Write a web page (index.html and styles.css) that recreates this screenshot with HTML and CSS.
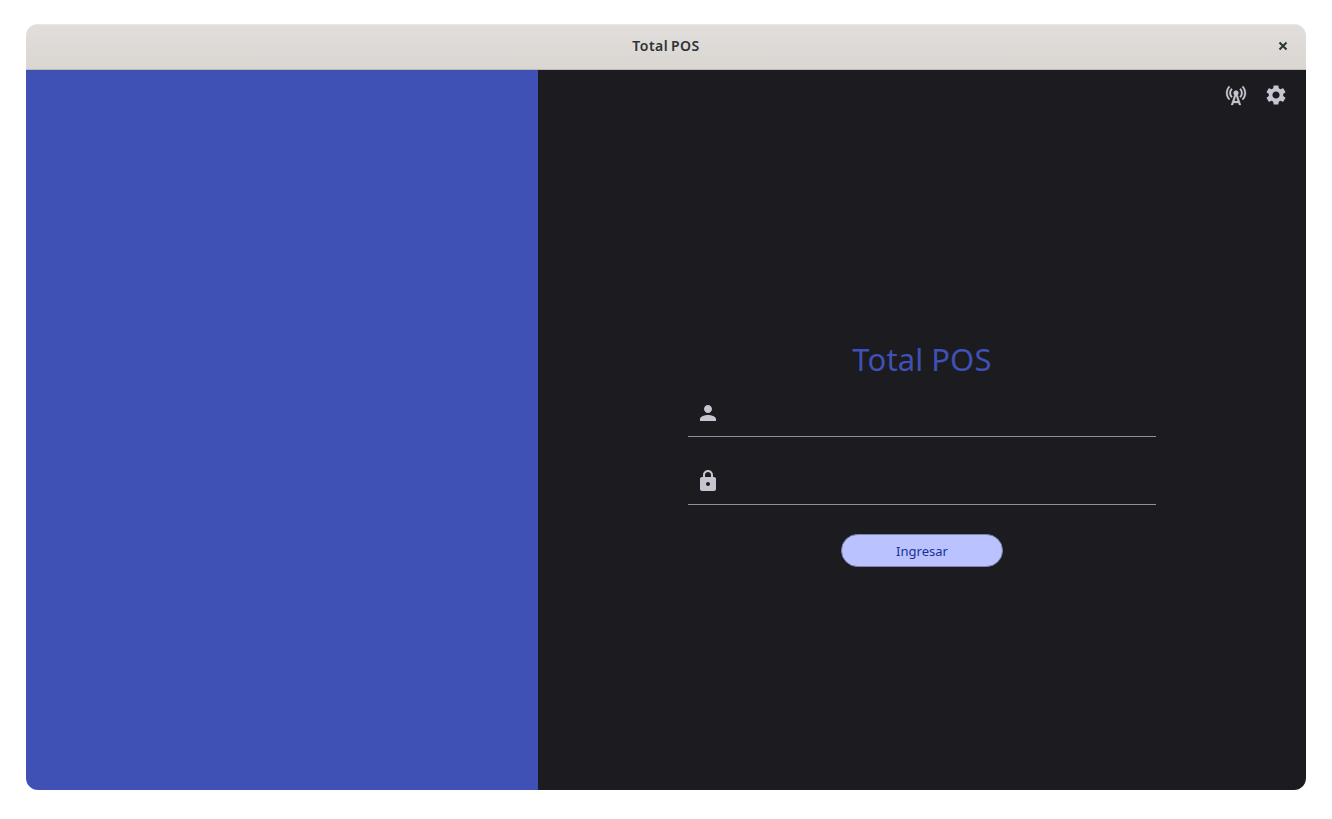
FILE: index.html
```html
<!DOCTYPE html>
<html lang="es">
<head>
<meta charset="utf-8">
<title>Total POS</title>
<link rel="stylesheet" href="styles.css">
</head>
<body>
<main class="window">
  <header class="titlebar">
    <span class="window-title">Total POS</span>
    <button class="close" aria-label="Cerrar"><svg viewBox="0 0 10 10"><path d="M1.5 1.5 8.5 8.5M8.5 1.5 1.5 8.5"/></svg></button>
  </header>
  <div class="content">
    <aside class="brand"></aside>
    <section class="panel">
      <nav class="toolbar">
        <svg class="icon tower" viewBox="0 0 24 24"><path d="M7.3 14.7l1.2-1.2c-1-1-1.5-2.3-1.5-3.5 0-1.3.5-2.6 1.5-3.5L7.3 5.3c-1.3 1.3-2 3-2 4.7s.7 3.4 2 4.7zM19.1 2.9l-1.2 1.2c1.6 1.6 2.4 3.8 2.4 5.9s-.8 4.3-2.4 5.9l1.2 1.2c2-2 2.9-4.5 2.9-7.1s-1-5.1-2.9-7.1zM6.1 4.1L4.9 2.9C3 4.9 2 7.4 2 10s1 5.1 2.9 7.1l1.2-1.2c-1.6-1.6-2.4-3.8-2.4-5.9s.8-4.3 2.4-5.9zM16.7 14.7c1.3-1.3 2-3 2-4.7-.1-1.7-.7-3.4-2-4.7l-1.2 1.2c1 1 1.5 2.3 1.5 3.5 0 1.3-.5 2.6-1.5 3.5l1.2 1.2zM14.5 10c0-1.38-1.12-2.5-2.5-2.5S9.5 8.62 9.5 10c0 .76.34 1.42.87 1.88L7 22h2l.67-2h4.67l.66 2h2l-3.37-10.12c.53-.46.87-1.12.87-1.88zm-4.17 8L12 13l1.67 5h-3.34z"/></svg>
        <svg class="icon" viewBox="0 0 24 24"><path d="M19.14 12.94c.04-.3.06-.61.06-.94 0-.32-.02-.64-.07-.94l2.03-1.58c.18-.14.23-.41.12-.61l-1.92-3.32c-.12-.22-.37-.29-.59-.22l-2.39.96c-.5-.38-1.03-.7-1.62-.94l-.36-2.54c-.04-.24-.24-.41-.48-.41h-3.84c-.24 0-.43.17-.47.41l-.36 2.54c-.59.24-1.13.57-1.62.94l-2.39-.96c-.22-.08-.47 0-.59.22L2.74 8.87c-.12.21-.08.47.12.61l2.03 1.58c-.05.3-.09.63-.09.94s.02.64.07.94l-2.03 1.58c-.18.14-.23.41-.12.61l1.92 3.32c.12.22.37.29.59.22l2.39-.96c.5.38 1.03.7 1.62.94l.36 2.54c.05.24.24.41.48.41h3.84c.24 0 .44-.17.47-.41l.36-2.54c.59-.24 1.13-.56 1.62-.94l2.39.96c.22.08.47 0 .59-.22l1.92-3.32c.12-.22.07-.47-.12-.61l-2.01-1.58zM12 15.6c-1.98 0-3.6-1.62-3.6-3.6s1.62-3.6 3.6-3.6 3.6 1.62 3.6 3.6-1.62 3.6-3.6 3.6z"/></svg>
      </nav>
      <form class="login">
        <h1 class="heading">Total POS</h1>
        <label class="field">
          <svg class="icon" viewBox="0 0 24 24"><path d="M12 12c2.21 0 4-1.79 4-4s-1.79-4-4-4-4 1.79-4 4 1.79 4 4 4zm0 2c-2.67 0-8 1.34-8 4v2h16v-2c0-2.66-5.33-4-8-4z"/></svg>
          <input class="input" type="text" aria-label="Usuario">
        </label>
        <label class="field">
          <svg class="icon" viewBox="0 0 24 24"><path d="M18 8h-1V6c0-2.76-2.24-5-5-5S7 3.24 7 6v2H6c-1.1 0-2 .9-2 2v10c0 1.1.9 2 2 2h12c1.1 0 2-.9 2-2V10c0-1.1-.9-2-2-2zm-6 9c-1.1 0-2-.9-2-2s.9-2 2-2 2 .9 2 2-.9 2-2 2zm3-9H9V6c0-1.66 1.34-3 3-3s3 1.34 3 3v2z"/></svg>
          <input class="input" type="password" aria-label="Clave">
        </label>
        <button class="submit" type="button">Ingresar</button>
      </form>
    </section>
  </div>
</main>
</body>
</html>
```
FILE: styles.css
```css
* { box-sizing: border-box; }

body {
  margin: 0;
  padding: 24px 26px 29px;
  height: 819px;
  background: #fff;
  font-family: "Noto Sans", sans-serif;
}

.window {
  display: flex;
  flex-direction: column;
  height: 766px;
  border-radius: 12px;
  overflow: hidden;
}

.titlebar {
  display: grid;
  grid-template-columns: 46px 1fr 46px;
  align-items: center;
  height: 46px;
  padding-bottom: 1px;
  background: linear-gradient(#e1dedb, #dad6d2);
  border-bottom: 1px solid #bfb8b1;
  box-shadow: inset 0 1px #e9e7e4;
}

.window-title {
  grid-column: 2;
  text-align: center;
  font-size: 14px;
  line-height: 20px;
  font-weight: 600;
  letter-spacing: 0.5px;
  word-spacing: -1.5px;
  color: #2e3436;
}

.close {
  display: flex;
  justify-content: center;
  padding: 0;
  border: 0;
  background: none;
}

.close svg {
  width: 10px;
  height: 10px;
  fill: none;
  stroke: #2e3436;
  stroke-width: 2;
}

.content {
  flex: 1;
  display: grid;
  grid-template-columns: 512px 1fr;
}

.brand { background: #3f51b5; }

.panel {
  display: flex;
  flex-direction: column;
  background: #1c1b1f;
}

.toolbar {
  display: flex;
  justify-content: flex-end;
  gap: 16px;
  padding: 13px 18px 0 0;
}

.icon {
  flex: none;
  width: 24px;
  height: 24px;
  fill: #c7c5d0;
}

.tower {
  stroke: #c7c5d0;
  stroke-width: 0.25;
}

.login {
  display: flex;
  flex-direction: column;
  align-items: center;
  width: 468px;
  margin: 229px auto 0;
}

.heading {
  margin: 0 0 17px;
  height: 52px;
  font-size: 31px;
  line-height: 47px;
  font-weight: 400;
  letter-spacing: 0.15px;
  word-spacing: -0.5px;
  white-space: nowrap;
  color: #3f51b5;
}

.field {
  display: flex;
  align-items: center;
  width: 100%;
  height: 48px;
  padding: 0 8px;
  margin-top: -16px;
  margin-bottom: 36px;
  border-bottom: 1px solid #918f9a;
}

.input {
  flex: 1;
  height: 40px;
  border: 0;
  outline: 0;
  background: transparent;
  color: #e5e1e6;
}

.submit {
  width: 162px;
  height: 33px;
  margin-top: -7px;
  padding: 1px 0 0;
  border: 1px solid #7d82aa;
  border-radius: 17px;
  background: #bac3ff;
  color: #1b3196;
  font-family: inherit;
  font-size: 13px;
  font-weight: 400;
  line-height: 31px;
}
```
